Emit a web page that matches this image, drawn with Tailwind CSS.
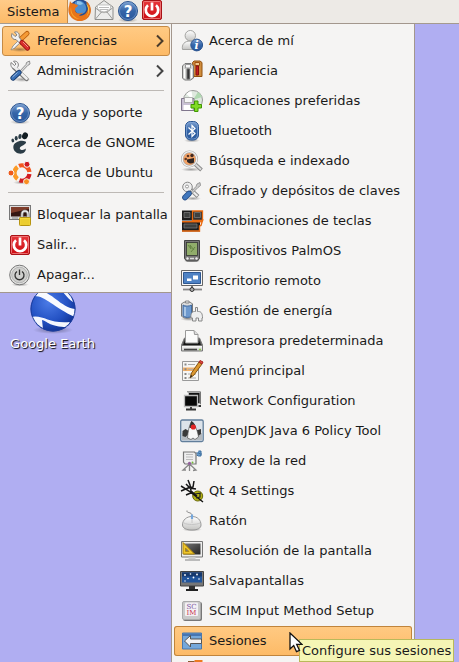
<!DOCTYPE html>
<html lang="es">
<head>
<meta charset="utf-8">
<meta name="viewport" content="width=device-width, initial-scale=1">
<title>Escritorio</title>
<script src="https://cdn.jsdelivr.net/npm/@tailwindcss/browser@4"></script>
</head>
<body class="relative h-screen overflow-hidden bg-[#b0aef2] font-['DejaVu_Sans',sans-serif] text-[13px] leading-4 text-[#1a1a1a]">

<svg class="absolute size-0" aria-hidden="true">
  <defs>
    <linearGradient id="blue" x1="0" y1="0" x2="0" y2="1"><stop offset="0" stop-color="#7b9fd0"/><stop offset=".5" stop-color="#3565a8"/><stop offset="1" stop-color="#28579b"/></linearGradient>
    <linearGradient id="red" x1="0" y1="0" x2="0" y2="1"><stop offset="0" stop-color="#e8383c"/><stop offset="1" stop-color="#cc0a10"/></linearGradient>
    <linearGradient id="grey" x1="0" y1="0" x2="0" y2="1"><stop offset="0" stop-color="#fff"/><stop offset="1" stop-color="#c4c4c2"/></linearGradient>
    <linearGradient id="dark" x1="0" y1="0" x2="1" y2="1"><stop offset="0" stop-color="#777"/><stop offset="1" stop-color="#222"/></linearGradient>
    <radialGradient id="globe" cx=".4" cy=".35" r=".7"><stop offset="0" stop-color="#4c7be6"/><stop offset=".6" stop-color="#2452c4"/><stop offset="1" stop-color="#0f2f8e"/></radialGradient>
    <radialGradient id="shadow"><stop offset="0" stop-color="#000" stop-opacity=".35"/><stop offset="1" stop-color="#000" stop-opacity="0"/></radialGradient>
    <symbol id="help" viewBox="0 0 24 24">
      <ellipse cx="12" cy="21" rx="10" ry="2.5" fill="url(#shadow)"/>
      <circle cx="12" cy="12" r="9.5" fill="url(#blue)" stroke="#2c5590"/>
      <circle cx="12" cy="12" r="8.5" fill="none" stroke="#87a9d6" stroke-opacity=".6"/>
      <text x="12" y="17.5" text-anchor="middle" font-size="15" font-weight="bold" fill="#fff">?</text>
    </symbol>
    <symbol id="logout" viewBox="0 0 24 24">
      <rect x="2.500" y="2.500" width="19" height="19" rx="1.500" fill="url(#red)" stroke="#a81216"/>
      <rect x="3.500" y="3.500" width="17" height="17" rx="1" fill="none" stroke="#f08484" stroke-opacity=".8"/>
      <path d="M8 7.300a6.200 6.200 0 1 0 8 0" fill="none" stroke="#fff" stroke-width="2.700"/>
      <path d="M12 4.500v8" stroke="#fff" stroke-width="2.700"/>
    </symbol>
    <symbol id="tools-blue" viewBox="0 0 24 24">
      <ellipse cx="14" cy="20.500" rx="9" ry="2.500" fill="url(#shadow)"/>
      <path d="M6 8.500 18.500 20" stroke="#777" stroke-width="4.400" stroke-linecap="round"/>
      <path d="M3 3.500 6.500 6.500 8 5 5.500 2.200C9 1.600 11 4 10.200 7.200L8 9.800C5 10.500 2 8 3 3.500Z" fill="#f4f4f4" stroke="#777" stroke-width=".9"/>
      <path d="M7 8.500 18.500 19.500" stroke="#eee" stroke-width="2.800" stroke-linecap="round"/>
      <path d="M11 13 18 5.500 18.500 3.500 21.500 2 22 5 19.700 6.500 12.500 14" fill="#ddd" stroke="#888" stroke-width=".9"/>
      <path d="m5 19 6-5.500" stroke="#193c6d" stroke-width="5.200" stroke-linecap="round"/>
      <path d="m5 19 6-5.500" stroke="#3b70b5" stroke-width="3.600" stroke-linecap="round"/>
      <path d="m4.500 18 5-4.500" stroke="#9fbfe6" stroke-width="1"/>
    </symbol>
  </defs>
</svg>

<header class="flex h-6 items-start border-b border-[#a59a8f] bg-[#edeae6]">
  <button class="h-[23px] border-r border-[#c58b4a] bg-linear-to-b from-[#ffcb88] to-[#fdbb68] pr-2 pl-[7px]">Sistema</button>
  <nav class="flex" aria-label="Lanzadores">
    <a href="#firefox" aria-label="Firefox" class="size-6"><svg viewBox="0 0 24 24" class="-mt-[2px] size-6"><circle cx="12" cy="12" r="10.500" fill="#264d91"/><path d="M7 4c5-3 10 0 11 5s-2 7-6 7-7-5-5-12Z" fill="#4e8fd0"/><path d="M9 3c3 0 5 1 6 3l-3 1-3-1Z" fill="#8ec4ea"/><path d="M2 3c1 2 2 2.500 4 2.500 1 1 3 1 4 2-1 2-3 2-3 4 0 4 4 5 8 3-1 2-4 2-4 3 5 1 9-3 9-8 0-2-1-4-2-6 4.500 2 6.500 9 3.500 14-2 4-6 5.500-9.500 5.500C4.500 23-2 16 1.200 7.500Z" fill="#e8741a"/><path d="M18 5c4 4 4 10 0 14 3-4 3-8 0-14Z" fill="#ffd543"/><path d="M3 9c0 6 3 11 9 12-6 1-11-6-9-12Z" fill="#f9a52b"/></svg></a>
    <a href="#correo" aria-label="Correo" class="size-6"><svg viewBox="0 0 24 24" class="-mt-[2px] size-6"><path d="M3.500 9 12 2.500 21 9v12.500H3Z" fill="#ececeb" stroke="#8d8d8b" stroke-linejoin="round"/><path d="M5.500 10.500V7h13v3.500L12 15Z" fill="#fff" stroke="#b5b5b3" stroke-width=".8"/><path d="M7 9.500h10M8 11.500h8" stroke="#bbb"/><path d="m3.500 21 6-7h5.500l5.500 7M3.500 10l6 4.500M20.500 10l-6 4.500" fill="none" stroke="#9b9b99"/></svg></a>
    <a href="#ayuda" aria-label="Ayuda" class="size-6"><svg class="-mt-px size-6"><use href="#help"/></svg></a>
    <a href="#cerrar" aria-label="Cerrar sesión" class="size-6"><svg class="-mt-[2px] size-6"><use href="#logout"/></svg></a>
  </nav>
</header>

<main class="flex items-start">
  <div class="flex w-[171px] flex-none flex-col">
    <nav aria-label="Sistema" class="z-10 border-b border-[#a3978d] bg-[#f5f4f3] pt-[2px] pr-px pb-[2px] pl-[2px]">
      <ul>
        <li><a href="#preferencias" class="flex h-[30px] items-center gap-[5px] rounded-[3px] border border-[#c58a45] bg-linear-to-b from-[#ffca83] to-[#fdba66] pr-1 pl-[5px] whitespace-nowrap">
          <svg viewBox="0 0 24 24" class="size-6 flex-none"><ellipse cx="12" cy="20.500" rx="11" ry="2.500" fill="url(#shadow)"/><path d="m5 19 8-8" stroke="#777" stroke-width="3"/><path d="m3 21 2-4 7-7 2 2-7.500 7Z" fill="#f4f4f4" stroke="#888" stroke-width=".7"/><path d="M13.500 9.500 19 4.500" stroke="#b65b0b" stroke-width="5" stroke-linecap="round"/><path d="M13.500 9.500 19 4.500" stroke="#f59a35" stroke-width="3.400" stroke-linecap="round"/><path d="M4 4.500 7 7.500 9 6 6.500 3C10 2 12 5 11 8l3 4-2.500 2L8 10.500C5 11 2.500 8 4 4.500Z" fill="#f1f1f1" stroke="#777" stroke-width=".9"/><path d="m14 13.500 5.500 5.500" stroke="#8e0d0d" stroke-width="5.200" stroke-linecap="round"/><path d="m14 13.500 5.500 5.500" stroke="#d9302c" stroke-width="3.600" stroke-linecap="round"/><path d="m15 13 5 5" stroke="#f59a8c"/></svg>
          <span class="flex-1">Preferencias</span>
          <svg viewBox="0 0 10 14" class="h-[14px] w-[10px]"><path d="m2 1.500 5.500 5.500L2 12.500" fill="none" stroke="#4b3b2a" stroke-width="2"/></svg></a></li>
        <li><a href="#administracion" class="flex h-[30px] items-center gap-[5px] pr-[5px] pl-1.5 whitespace-nowrap"><svg class="size-6 flex-none"><use href="#tools-blue"/></svg><span class="flex-1">Administración</span><svg viewBox="0 0 10 14" class="h-[14px] w-[10px]"><path d="m2 1.500 5.500 5.500L2 12.500" fill="none" stroke="#444" stroke-width="2"/></svg></a></li>
      </ul>
      <hr class="mx-1.5 mt-1 mb-[7px] border-[#bdb9b5]">
      <ul>
        <li><a href="#soporte" class="flex h-[30px] items-center gap-[5px] pl-1.5 whitespace-nowrap"><svg class="size-6 flex-none"><use href="#help"/></svg>Ayuda y soporte</a></li>
        <li><a href="#gnome" class="flex h-[30px] items-center gap-[5px] pl-1.5 whitespace-nowrap"><svg viewBox="0 0 24 24" class="size-6 flex-none" fill="#2b3c46"><ellipse cx="17" cy="4.800" rx="2.800" ry="3.500" transform="rotate(25 17 4.800)" fill="#111c22"/><ellipse cx="12" cy="5.500" rx="1.700" ry="2.600" transform="rotate(10 12 5.500)"/><ellipse cx="8.200" cy="7.200" rx="1.500" ry="2.200"/><ellipse cx="4.800" cy="9.500" rx="1.400" ry="1.900" transform="rotate(-15 4.800 9.500)"/><path d="M17.500 10.500C13 8.500 5.500 11 5.300 16c0 4 3.500 6.700 7.200 6.700 3.500 0 5.700-2.500 5.200-5.200-1 1-3 2-4.800 1.200-1.800-.8-1.300-2.700.5-3.500 2.500-1.200 6-3.200 4.100-4.700Z"/></svg>Acerca de GNOME</a></li>
        <li><a href="#ubuntu" class="flex h-[30px] items-center gap-[5px] pl-1.5 whitespace-nowrap"><svg viewBox="0 0 24 24" class="size-6 flex-none"><ellipse cx="14" cy="21.500" rx="9" ry="2" fill="url(#shadow)"/><g fill="none" stroke-width="4.200"><path d="M11 4.900A7.500 7.500 0 0 1 21.400 11" stroke="#f4561f"/><path d="M21.400 13A7.500 7.500 0 0 1 11.500 19.300" stroke="#d21b20"/><path d="M9.500 18A7.500 7.500 0 0 1 9.500 6" stroke="#fb9a26"/></g><g stroke="#f5f4f3" stroke-width="1"><circle cx="3" cy="12" r="3" fill="#ee5a1c"/><circle cx="19" cy="3.300" r="3" fill="#cf1b22"/><circle cx="18.500" cy="20.700" r="3" fill="#f98e20"/></g></svg>Acerca de Ubuntu</a></li>
      </ul>
      <hr class="mx-1.5 mt-1 mb-[7px] border-[#bdb9b5]">
      <ul>
        <li><a href="#bloquear" class="flex h-[30px] items-center gap-[5px] pl-1.5 whitespace-nowrap"><svg viewBox="0 0 24 24" class="size-6 flex-none"><rect x="1.500" y="2.500" width="21" height="14" fill="#ddd" stroke="#777"/><rect x="3" y="4" width="18" height="9.500" fill="#351712"/><path d="M3 4h18v2L3 10Z" fill="#7f3d2b"/><path d="M4 15h6" stroke="#888"/><path d="M14 15v-3.500a3 3.500 0 0 1 6 0V15" fill="none" stroke="#777" stroke-width="3"/><path d="M14 15v-3.500a3 3.500 0 0 1 6 0V15" fill="none" stroke="#eee" stroke-width="1.300"/><rect x="11.500" y="14.500" width="11" height="8" rx=".8" fill="#f5d93a" stroke="#b69410"/><path d="M12.500 17h9M12.500 19h9M12.500 21h9" stroke="#dcb81f" stroke-width=".7"/></svg>Bloquear la pantalla</a></li>
        <li><a href="#salir" class="flex h-[30px] items-center gap-[5px] pl-1.5 whitespace-nowrap"><svg class="size-6 flex-none"><use href="#logout"/></svg>Salir...</a></li>
        <li><a href="#apagar" class="flex h-[30px] items-center gap-[5px] pl-1.5 whitespace-nowrap"><svg viewBox="0 0 24 24" class="size-6 flex-none"><ellipse cx="12" cy="21.500" rx="9" ry="2" fill="url(#shadow)"/><circle cx="11.500" cy="12" r="9.800" fill="#e4e4e2" stroke="#777"/><circle cx="11.500" cy="12" r="7.800" fill="#cfcfcd" stroke="#aaa" stroke-width=".8"/><path d="M9 8.500a4.500 4.500 0 1 0 5 0M11.500 6.500v5.500" fill="none" stroke="#333" stroke-width="1.300"/></svg>Apagar...</a></li>
      </ul>
    </nav>
    <a href="#google-earth" class="-mt-2.5 flex w-[105px] flex-col items-center gap-px text-white [text-shadow:1px_1px_1px_#000]">
      <svg viewBox="0 0 48 52" class="h-[52px] w-12"><defs><clipPath id="disc"><circle cx="24" cy="26" r="22.500"/></clipPath></defs><ellipse cx="24" cy="47" rx="20" ry="4" fill="url(#shadow)"/><circle cx="24" cy="26" r="22.500" fill="url(#globe)"/><g clip-path="url(#disc)"><path d="M4 13C16 12 24 24 46 34c1-2 1-5 0-8C31 24 24 9 8 7Z" fill="#f8faff"/><path d="M26 4c8 2 11 11 18 15l-2-8-7-6Z" fill="#f3f6ff"/><path d="M1 34c14-3 18 7 40 5l-3 5C21 44 18 38 13 37l1 9-9-7Z" fill="#f4f6fd"/></g><circle cx="24" cy="26" r="22" fill="none" stroke="#1d3e9e"/></svg>
      <span>Google Earth</span>
    </a>
  </div>

  <nav aria-label="Preferencias" class="-mt-px w-[244px] flex-none border border-[#a3978d] bg-[#f5f4f3] p-[2px]">
    <ul class="[&>li>a]:flex [&>li>a]:h-[30px] [&>li>a]:items-center [&>li>a]:gap-[5px] [&>li>a]:pl-1.5 [&>li>a]:whitespace-nowrap [&>li>a>svg]:size-6 [&>li>a>svg]:flex-none">
      <li><a href="#acerca"><svg viewBox="0 0 24 24"><path d="M2.500 20.500c-1-5 2-8.500 7.500-8.500s8 3.500 7.500 8.500Z" fill="url(#grey)" stroke="#a4a4a2"/><circle cx="10.300" cy="6.700" r="5.200" fill="url(#grey)" stroke="#a4a4a2"/><circle cx="16.700" cy="16" r="5.900" fill="url(#blue)" stroke="#2c5590"/><text x="16.700" y="20" text-anchor="middle" font-family="DejaVu Serif" font-size="11" font-style="italic" font-weight="bold" fill="#fff">i</text></svg>Acerca de mí</a></li>
      <li><a href="#apariencia"><svg viewBox="0 0 24 24"><path d="M12.500 3.500 14 2h6l2 1.500v14h-8Z" fill="#cf8d3d" stroke="#925110"/><path d="M15 3.500h4.500v3H15Z" fill="#f0c890" stroke="#a05010"/><path d="M16 7h2.500v9H16Z" fill="#c51d20" stroke="#87100f"/><path d="M2.500 7 5 4.500h6L13.500 7v12l-3 2h-6l-2-2Z" fill="#d6d7d5" stroke="#777"/><path d="M5.500 5.500h5v3.500h-5Z" fill="#f7f7f7" stroke="#999"/><path d="M4.500 10v9M11.500 10v9" stroke="#fff"/><path d="M7 10h2.500v10H7Z" fill="#333" stroke="#666"/></svg>Apariencia</a></li>
      <li><a href="#aplicaciones"><svg viewBox="0 0 24 24"><circle cx="13" cy="11" r="9.500" fill="#dfe9df" stroke="#999"/><path d="M13 11 18 3a9 9 0 0 1 4 5Z" fill="#b1d9b2"/><path d="M13 11 6.500 5a9 9 0 0 1 5-3Z" fill="#fff"/><path d="M1.500 9.500H14v12H1.500Z" fill="#c9c1d4" stroke="#80768c"/><path d="M4.500 8.500h8v5h-8Z" fill="#f7f7f7" stroke="#999" stroke-width=".7"/><path d="M3.500 16h9v5h-9Z" fill="#fff"/><path d="M14.500 12h3.500v3.500h3.500V19H18v3.500h-3.500V19H11v-3.500h3.500Z" fill="#80db25" stroke="#419703"/></svg>Aplicaciones preferidas</a></li>
      <li><a href="#bluetooth"><svg viewBox="0 0 24 24"><ellipse cx="12" cy="21.500" rx="8" ry="2" fill="url(#shadow)"/><rect x="5.500" y="2.500" width="13" height="18.500" rx="5" fill="url(#blue)" stroke="#295593"/><rect x="6.500" y="3.500" width="11" height="16.500" rx="4" fill="none" stroke="#87aad7" stroke-opacity=".7"/><path d="m8.500 8.500 6.500 6-3 3v-11l3 3-6.500 6" fill="none" stroke="#fff" stroke-width="1.200"/></svg>Bluetooth</a></li>
      <li><a href="#busqueda"><svg viewBox="0 0 24 24"><ellipse cx="11" cy="20.500" rx="10" ry="2" fill="url(#shadow)"/><path d="m15 15 6.500 6" stroke="#888" stroke-width="3.800"/><path d="m15 15 6 5.500" stroke="#ddd" stroke-width="1.800"/><circle cx="9.500" cy="10" r="7.300" fill="#f4a366" stroke="#aaa" stroke-width="2.400"/><circle cx="9.500" cy="10" r="7.300" fill="none" stroke="#f4f4f4" stroke-width="1.200"/><path d="M7 10.500 14 9v4.500c-2 1.500-5 1.500-7-1Z" fill="#2e2523"/><circle cx="5.700" cy="10" r="1.300" fill="#5b3727"/><circle cx="8" cy="7" r="1.300" fill="#5b3727"/><circle cx="12" cy="6.500" r="1.700" fill="#432b22"/></svg>Búsqueda e indexado</a></li>
      <li><a href="#cifrado"><svg viewBox="0 0 24 24"><ellipse cx="13" cy="19.500" rx="8" ry="2" fill="url(#shadow)"/><path d="m9 9 9 8.500" stroke="#888" stroke-width="4"/><path d="m9 9 8.500 8" stroke="#eee" stroke-width="2.200"/><circle cx="7.500" cy="8" r="4.800" fill="#eee" stroke="#888"/><circle cx="7" cy="7.500" r="1.500" fill="#fff" stroke="#999"/><path d="m10 14 6-6.500 1-2.500 3-1.500.5 3L18 8.500 11.500 15" fill="#ccc" stroke="#888" stroke-width=".8"/><path d="m5 18.500 4-4" stroke="#234b84" stroke-width="5.600" stroke-linecap="round"/><path d="m5 18.500 4-4" stroke="#4278bd" stroke-width="4" stroke-linecap="round"/></svg>Cifrado y depósitos de claves</a></li>
      <li><a href="#teclas"><svg viewBox="0 0 24 24"><path d="M2 1.500h10v10H2ZM2 13h18v9.500H2Z" fill="#1c1c1c"/><path d="M12.500 2h10v9.500h-10Z" fill="#333" stroke="#ea6b12" stroke-width="1.300"/><path d="M2 12.700h18.500l2-1.200-1.500 5-1.500.5V22H2" fill="none" stroke="#ea6b12" stroke-width="1.400"/><path d="M4 3.500h6v5H4ZM14.500 3.500h6v5h-6ZM4 15h13v4H4Z" fill="#3e403f" stroke="#777" stroke-width=".8"/></svg>Combinaciones de teclas</a></li>
      <li><a href="#palm"><svg viewBox="0 0 24 24"><ellipse cx="12" cy="22" rx="9" ry="1.500" fill="url(#shadow)"/><path d="M4.500 1.500h15v18l-2 2.500h-11l-2-2.500Z" fill="#777" stroke="#444"/><rect x="6.500" y="3.500" width="11" height="13" fill="#91ad6b" stroke="#333" stroke-width=".8"/><path d="M8 6l3 4-1-4 4 5M11 13l4-5" stroke="#668544" fill="none"/><circle cx="7.500" cy="19.500" r="1.200" fill="#eee"/><circle cx="16.500" cy="19.500" r="1.200" fill="#eee"/><path d="M10 19.500h4" stroke="#ddd" stroke-width="1.500"/></svg>Dispositivos PalmOS</a></li>
      <li><a href="#remoto"><svg viewBox="0 0 24 24"><path d="M1.500 1.500h21v15h-21Z" fill="#f7f7f7" stroke="#666"/><path d="M3.500 3.500h17v11h-17Z" fill="#4e82c4" stroke="#2e5791"/><path d="M7 9.500h4.500V12H7ZM13 6.500h5v4h-5Z" fill="#fff"/><path d="M3 20.500h19" stroke="#888" stroke-width="1.800"/><path d="M12 17v3" stroke="#777" stroke-width="2"/><circle cx="12" cy="20.500" r="2" fill="#aaa" stroke="#333"/></svg>Escritorio remoto</a></li>
      <li><a href="#energia"><svg viewBox="0 0 24 24"><ellipse cx="9" cy="20" rx="9" ry="2" fill="url(#shadow)"/><path d="M1.500 5c2-3 9-3 11 0v12c-2 3-9 3-11 0Z" fill="#ddd" stroke="#777"/><path d="M3 6c2 1.500 6 1.500 8.500 0v11c-2 2-6.500 2-8.500 0Z" fill="#6d99ce" stroke="#426a9e"/><path d="M5 8v9" stroke="#b3cee9" stroke-width="1.700"/><path d="M5.500 2h3.500v2H5.500Z" fill="#eee" stroke="#888"/><path d="M15.500 8.500v4h-1c-3 0-4 3-3.500 6.500h1.500v3H16v-3h2.500v3H22V19h.5c0-4-1-6.500-4-6.500h-1v-4Z" fill="#eee" stroke="#888"/></svg>Gestión de energía</a></li>
      <li><a href="#impresora"><svg viewBox="0 0 24 24"><path d="M4.500 9h15l3 7v5.500h-21V16Z" fill="#555" stroke="#777"/><path d="M3 16.500h18l-2-5H5Z" fill="#161616"/><path d="M5.500 1.500H14l4 4V14H5.500Z" fill="#fbfbfb" stroke="#999"/><path d="m14 1.500 .5 4h3.500" fill="#ddd" stroke="#999"/><path d="M1.500 16.500h21v5.500h-21Z" fill="url(#grey)" stroke="#777"/><path d="M4 20.500h13" stroke="#444" stroke-width="1.600"/><path d="M19 20.500h2" stroke="#8acd47" stroke-width="1.500"/></svg>Impresora predeterminada</a></li>
      <li><a href="#menu"><svg viewBox="0 0 24 24"><path d="M2.500 2.500h16v19h-16Z" fill="#f6f6f5" stroke="#999"/><path d="M3 8.500h15v3.500H3Z" fill="#f6b268"/><path d="M4.500 5.500h2M4.500 10.300h2M4.500 15h2M4.500 19h2" stroke="#888" stroke-width="2"/><path d="M8 5.500h7M8 10.300h6M8 15h8M8 19h8" stroke="#aaa"/><path d="m10 19 1.500-5L19 3l3 2-8 11Z" fill="#dd9931" stroke="#855615"/><path d="m19 3 1-1.500 3 1.500L22 5Z" fill="#e34d44" stroke="#a22"/><path d="m10 19 1-3 1.500 1Z" fill="#222"/></svg>Menú principal</a></li>
      <li><a href="#network"><svg viewBox="0 0 24 24"><path d="M8.500 3.500h11.500v11H8.500Z" fill="#111" stroke="#bbb"/><path d="M7 2.800h13.500v12.500" fill="none" stroke="#777"/><path d="M4.500 6.500h13v11h-13Z" fill="#080808" stroke="#bbb" stroke-width="1.300"/><path d="M11 18v2M6 20.500h10M18.500 17h2.500" stroke="#333" stroke-width="1.800"/></svg>Network Configuration</a></li>
      <li><a href="#openjdk"><svg viewBox="0 0 24 24"><rect x=".7" y="1" width="22.500" height="21.500" rx="1.500" fill="#dce3ea" stroke="#617e9b" stroke-width="1.300"/><path d="M2 14h20v7H2Z" fill="#b5babf"/><path d="m2.500 12 3-2 5 3-5 5-3-1ZM16 11.500l5-1.500v5l-3 2Z" fill="#3a3a3a"/><path d="M11.500 2.500C15 5 18 13 18.500 18L15 20.500l-2-1.500-2 1.500-3.500-1.500C8 12 9 7 11.500 2.500Z" fill="#f7f7f7" stroke="#555" stroke-width=".7"/><path d="M11.500 2c3 2 4 4.500 4.500 7h-6.500c.3-2.500.8-5 2-7Z" fill="#333"/><circle cx="13.300" cy="8" r="2.600" fill="#e32424"/></svg>OpenJDK Java 6 Policy Tool</a></li>
      <li><a href="#proxy"><svg viewBox="0 0 24 24"><path d="M16 4h3l1 1h2M18.500 2h2.500v5h-2.500l-2-1" fill="#679ac9" stroke="#3c6e9f"/><path d="M3.500 3h11l1.500 1.500V15h-11L3.500 13Z" fill="#eee" stroke="#777" stroke-width="1.200"/><path d="M6 5.500h7M6 8h7M6 10.500h7" stroke="#bbb"/><path d="M9.500 15 3 21h3M9.500 15v7M9.500 15l6.500 6-3 .5" fill="none" stroke="#888" stroke-width="1.300"/><circle cx="9.500" cy="14.300" r="1.600" fill="#93609c"/><circle cx="12.500" cy="13.500" r="1" fill="#73ba37"/></svg>Proxy de la red</a></li>
      <li><a href="#qt"><svg viewBox="0 0 24 24"><circle cx="17.700" cy="17" r="5" fill="#b4b313" stroke="#69680a"/><path d="m1 7 8 5 9 7 5 4M8 1l2 5 1 6 6 5M1 12l7-3 5-1 1-6M6 16l7-3M6 5l4 4 6 1" fill="none" stroke="#161616" stroke-width="1.500"/><path d="m15 15 6-1M16 19l4-1v-4" fill="none" stroke="#222" stroke-width="1.200"/></svg>Qt 4 Settings</a></li>
      <li><a href="#raton"><svg viewBox="0 0 24 24"><ellipse cx="12" cy="20.500" rx="10" ry="2" fill="url(#shadow)"/><path d="M2.500 16c0-5 4-8.500 9.500-8.500s9 3.500 9 8.500c0 3-3 5-9 5s-9.500-2-9.500-5Z" fill="url(#grey)" stroke="#999"/><path d="M4 14c3 2 12 2 16 0M12 7.500V14" fill="none" stroke="#c6c6c6"/><path d="M7 1.500c-1 3 5 1 5 5" fill="none" stroke="#888"/><path d="M12 5.500V10" stroke="#77a8dc" stroke-width="2.200"/></svg>Ratón</a></li>
      <li><a href="#resolucion"><svg viewBox="0 0 24 24"><path d="M1.500 2.500h21v15.500h-21Z" fill="#eee" stroke="#777"/><path d="M3.500 4.500h17v11h-17Z" fill="url(#dark)"/><path d="M8.500 18h7v2h-7Z" fill="#ccc"/><path d="M5 21h15" stroke="#bbb" stroke-width="2"/><path d="M3 3.500 14.500 15H3Z" fill="#efc72e" stroke="#ae8508"/><path d="m5.500 9 3.500 3.500H5.500Z" fill="#777" stroke="#ae8508" stroke-width=".8"/></svg>Resolución de la pantalla</a></li>
      <li><a href="#salvapantallas"><svg viewBox="0 0 24 24"><path d="M.5 2.500h23V17H.5Z" fill="#777" stroke="#444"/><path d="M2 3.500h20v10H2Z" fill="#22559b"/><path d="M2 3.500h20v4H2Z" fill="#16396e"/><g fill="#fff"><circle cx="5" cy="6" r=".9"/><circle cx="10.500" cy="5" r=".8"/><circle cx="17" cy="5.500" r=".9"/><circle cx="8" cy="9.500" r=".8"/><circle cx="13.500" cy="8.500" r=".9"/><circle cx="19" cy="10" r=".8"/><circle cx="5" cy="12" r=".7"/></g><path d="M9 17h6v3H9Z" fill="#333"/><path d="M6 21h12" stroke="#222" stroke-width="2"/></svg>Salvapantallas</a></li>
      <li><a href="#scim"><svg viewBox="0 0 24 24"><rect x="3" y="3" width="19" height="19" rx="2" fill="#777"/><rect x="2.500" y="2.500" width="18" height="18" rx="1.500" fill="#c9c9c9" stroke="#aaa"/><rect x="5" y="3.500" width="13" height="13.500" rx="1" fill="#f3f1f4"/><text x="11.500" y="9.500" text-anchor="middle" font-family="DejaVu Serif" font-size="7" fill="#7d56a0">SC</text><text x="11.500" y="16" text-anchor="middle" font-family="DejaVu Serif" font-size="7" fill="#c8324f">IM</text></svg>SCIM Input Method Setup</a></li>
      <li class="rounded-[3px] bg-linear-to-b from-[#ffca83] to-[#fdba66] inset-ring inset-ring-[#c0843c]"><a href="#sesiones"><svg viewBox="0 0 24 24"><path d="M2.500 4h19v16h-19Z" fill="#75a8da" stroke="#4a78ad"/><path d="M3 4.500h18V7H3Z" fill="#4676b2"/><path d="m4.500 12 6-5.500V10h11v4.500h-11V18Z" fill="#f4f4f4" stroke="#555"/></svg>Sesiones</a></li>
      <li><a href="#sonido" aria-label="Sonido"><svg viewBox="0 0 24 24"><path d="M14.500 1h8v18h-8Z" fill="#ed7a20"/><path d="M8 2h6.500v19H8Z" fill="#8a5a30"/></svg></a></li>
    </ul>
  </nav>
</main>

<div role="tooltip" class="absolute top-[639px] left-[299px] z-20 border border-[#b9b95a] bg-[#f5f5b5] px-[2px] pt-[3px] pb-[2px] whitespace-nowrap">Configure sus sesiones</div>
<svg viewBox="0 0 14 21" class="absolute top-[632px] left-[289px] z-30 h-[21px] w-[14px]" aria-hidden="true"><path d="M1 1v16l3.700-3.500 2.800 6.200 3-1.300-2.800-6H13Z" fill="#fff" stroke="#111" stroke-width="1.300"/></svg>
</body>
</html>
